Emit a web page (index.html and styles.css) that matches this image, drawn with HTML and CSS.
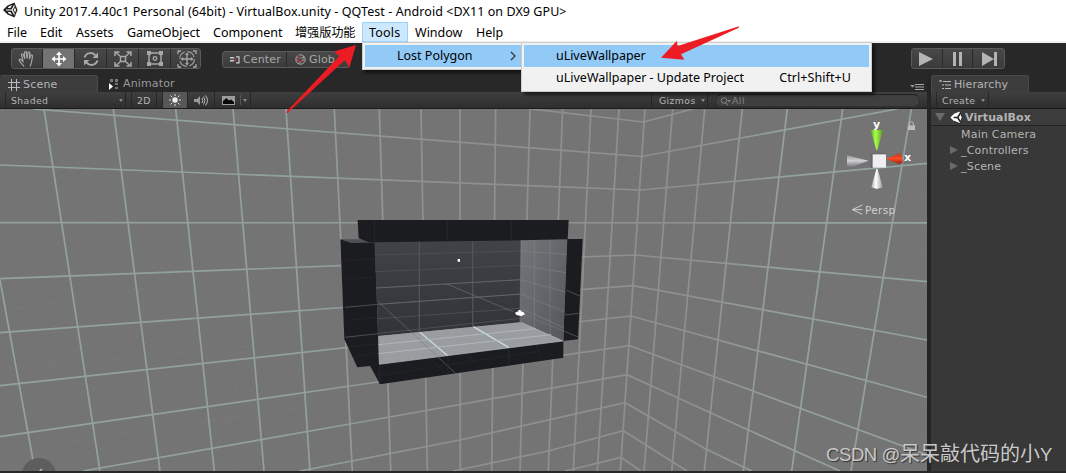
FILE: index.html
```html
<!DOCTYPE html>
<html lang="en">
<head>
<meta charset="utf-8">
<title>Unity 2017.4.40c1 Personal</title>
<link rel="stylesheet" href="styles.css">
</head>
<body>
<div class="window">
  <header class="titlebar">
    <svg class="unity-icon" width="15" height="16" viewBox="0 0 15 16"><path d="M0 8 4.500 3.500 11.500.500 14.500 8 11.500 15.500 4.500 12.500Z" fill="#222"/><path d="M3 8h6M9 8 11.500 3.500M9 8 11.500 12.500" stroke="#fff" stroke-width="1.200"/><path d="M5.500 4.800 9 3 7.500 6H4.800ZM5.500 11.200 9 13 7.500 10H4.800ZM12 5.500 13 8 12 10.500 10.800 8Z" fill="#fff"/></svg>
    <span class="title">Unity 2017.4.40c1 Personal (64bit) - VirtualBox.unity - QQTest - Android &lt;DX11 on DX9 GPU&gt;</span>
  </header>
  <nav class="menubar">
    <span class="m-file">File</span><span class="m-edit">Edit</span><span class="m-assets">Assets</span><span class="m-object">GameObject</span><span class="m-comp">Component</span><span class="m-cn">增强版功能</span><span class="m-tools">Tools</span><span class="m-window">Window</span><span class="m-help">Help</span>
  </nav>
  <div class="toolbar">
    <div class="group tools">
      <i><svg width="20" height="18" viewBox="0 0 20 18"><path d="M7 16.500C5 13.500 1.500 11 2.200 9.600c.8-1.100 2.200.2 3.800 1.600L4.500 5c-.1-1.400 1.400-1.500 1.800-.2L7.800 8.700 7.500 2.600c.1-1.300 1.800-1.300 2 0l.5 5.900 1-5.500c.3-1.300 1.900-1 1.800.3L12.300 9l1.500-3.500c.6-1 1.900-.5 1.700.6-.5 3-.8 7.400-2.500 10.400" fill="none" stroke="#a5a5a5" stroke-width="1.200"/></svg></i>
      <i class="on"><svg width="16" height="16" viewBox="0 0 16 16"><path d="M8 3v10M3 8h10" stroke="#fff" stroke-width="1.600"/><path d="M8 .5 11 4H5ZM8 15.500 11 12H5ZM.5 8 4 5v6ZM15.500 8 12 5v6Z" fill="#fff"/></svg></i>
      <i><svg width="16" height="16" viewBox="0 0 16 16"><path d="M1.500 6.500C3.500 1 10 1 12.500 4.500M14.500 9.500C12.500 15 6 15 3.500 11.500" fill="none" stroke="#a8a8a8" stroke-width="2"/><path d="M15 1.500v5.500H9.500ZM1 14.500V9h5.500Z" fill="#a8a8a8"/></svg></i>
      <i><svg width="18" height="16" viewBox="0 0 18 16"><path d="M6.500 5.500h5v5h-5ZM2 1.500l4 3.500M16 1.500 12 5M2 14.500 6 11M16 14.500 12 11M1 5V1h4.500M12.500 1H17v4M1 11v4h4.500M12.500 15H17v-4" fill="none" stroke="#a8a8a8" stroke-width="1.500"/></svg></i>
      <i><svg width="18" height="17" viewBox="0 0 18 17"><path d="M3 3h12v11H3Z" fill="none" stroke="#a8a8a8" stroke-width="1.500"/><path d="M1 1h4v4H1ZM13 1h4v4h-4ZM1 12h4v4H1ZM13 12h4v4h-4Z" fill="#a8a8a8"/><circle cx="9" cy="8.500" r="1.800" fill="none" stroke="#a8a8a8" stroke-width="1.300"/></svg></i>
      <i><svg width="20" height="18" viewBox="0 0 20 18"><circle cx="10" cy="9" r="7.300" fill="none" stroke="#999" stroke-width="1.200" stroke-dasharray="9 2.500"/><path d="M1 4V1h3M16 1h3v3M1 14v3h3M16 17h3v-3M10 4v10M5 9h10" fill="none" stroke="#a8a8a8" stroke-width="1.300"/><path d="M10 2.500 12 5H8ZM10 15.500 12 13H8ZM3.500 9 6 7v4ZM16.500 9 14 7v4Z" fill="#a8a8a8"/></svg></i>
    </div>
    <div class="group pivot">
      <span class="center"><svg width="10" height="8" viewBox="0 0 10 8"><path d="M0 1h4v1.500H0ZM0 4h4v1.500H0Z" fill="#ccc"/><path d="M6 .8h3v6H6" fill="none" stroke="#ccc" stroke-width="1.200"/><path d="M4 2h2v3H4Z" fill="#8d4a4a"/></svg>Center</span>
      <span class="global"><svg width="11" height="11" viewBox="0 0 11 11"><circle cx="5.500" cy="5.500" r="4.700" fill="#484848" stroke="#aaa"/><path d="M1.500 3.500Q6 5 9.500 3M3 9.500Q9 7.500 8.500 2M1 6Q6 8 10 6" fill="none" stroke="#aaa" stroke-width=".7"/><path d="M3.500 1v6h4" fill="none" stroke="#a52d35" stroke-width="1.500"/></svg>Glob</span>
    </div>
    <div class="group play">
      <i><svg width="16" height="14"><path d="M1 0v14L15 7Z" fill="#b4b4b4"/></svg></i><i><svg width="12" height="14"><path d="M2 0h3v14H2ZM8 0h3v14H8Z" fill="#b4b4b4"/></svg></i><i><svg width="16" height="14"><path d="M0 0v14L12 7ZM12 0h3v14h-3Z" fill="#b4b4b4"/></svg></i>
    </div>
  </div>
  <div class="workspace">
    <section class="scene">
      <div class="tabs">
        <span class="tab scene-tab"><svg width="12" height="12"><path d="M0 3.500h12M0 8.500h12M3.500 0v12M8.500 0v12" stroke="#bbb"/></svg>Scene</span>
        <span class="tab-off"><svg width="11" height="11"><path d="M2 0h3v3H2ZM7 0h3v3H7ZM7 4h3v2H7ZM7 8h3v2H7Z" fill="#777"/><path d="M1 4v7l4-3.500Z" fill="#fff"/></svg>Animator</span>
        <svg class="options" width="14" height="8"><path d="M0 2h5L2.500 4.500Z" fill="#999"/><path d="M5 1.500h9M5 4h9M5 6.500h9" stroke="#aaa"/></svg>
      </div>
      <div class="viewbar">
        <span class="shaded">Shaded<b class="caret"></b></span><span class="gap"></span><span class="twod">2D</span><span class="gap2"></span>
        <span class="light"><svg width="14" height="12" viewBox="0 0 14 12"><circle cx="7" cy="6" r="2.700" fill="#eee"/><path d="M7 0v2M7 10v2M1 6h2M11 6h2M2.500 1.500l1.700 1.700M9.800 8.800l1.700 1.700M11.500 1.500 9.800 3.200M4.200 8.800 2.500 10.500" stroke="#ddd"/></svg></span>
        <span class="audio"><svg width="14" height="11" viewBox="0 0 14 11"><path d="M0 4h3l3-3v9L3 7H0Z" fill="#999"/><path d="M8 3q1.500 2.500 0 5M9.500 1.500q3 4 0 8M11.500.500q4 5 0 10" fill="none" stroke="#bbb"/></svg></span>
        <span class="fx"><svg width="13" height="9" viewBox="0 0 13 9"><path d="M0 0h13v9H0Z" fill="#9c9c9c"/><path d="M1 8V5L4.500 2 7 4.500 9 3.500 12 6V8Z" fill="#080808"/></svg><u></u><b class="caret"></b></span>
        <span class="spacer"></span>
        <span class="gizmos">Gizmos<b class="caret"></b></span>
        <span class="search"><svg width="12" height="9"><circle cx="4" cy="3.500" r="2.800" fill="none" stroke="#858585"/><path d="M5.500 5.500 8 8.500" stroke="#858585"/><path d="M7 3h4L9 5.500Z" fill="#858585"/></svg>All</span>
      </div>
      <svg class="viewport" width="927" height="362" viewBox="0 109 927 362">
        <defs>
          <linearGradient id="line" gradientUnits="userSpaceOnUse" x1="0" y1="0" x2="927" y2="0"><stop offset="0" stop-color="#93a29f"/><stop offset=".33" stop-color="#91a09d"/><stop offset=".48" stop-color="#8e8f8f"/><stop offset=".74" stop-color="#8e8f8f"/><stop offset=".85" stop-color="#93a29f"/><stop offset="1" stop-color="#93a29f"/></linearGradient>
          <linearGradient id="back" x1="0" y1="0" x2="0" y2="1"><stop offset="0" stop-color="#424348"/><stop offset="1" stop-color="#323338"/></linearGradient>
          <linearGradient id="side" x1="0" y1="0" x2="1" y2="1"><stop offset="0" stop-color="#75767a"/><stop offset="1" stop-color="#55565b"/></linearGradient>
          <linearGradient id="green"><stop offset="0" stop-color="#5fa51f"/><stop offset=".4" stop-color="#a5ff4c"/><stop offset="1" stop-color="#5b971f"/></linearGradient>
          <linearGradient id="red" x1="0" y1="0" x2="0" y2="1"><stop offset="0" stop-color="#b53a20"/><stop offset=".5" stop-color="#fb4a25"/><stop offset="1" stop-color="#99250f"/></linearGradient>
          <linearGradient id="grayx" x1="0" y1="0" x2="0" y2="1"><stop offset="0" stop-color="#999"/><stop offset=".4" stop-color="#d0d0d4"/><stop offset="1" stop-color="#606060"/></linearGradient>
          <linearGradient id="white"><stop offset="0" stop-color="#aaa"/><stop offset=".4" stop-color="#fff"/><stop offset="1" stop-color="#999"/></linearGradient>
          <pattern id="dots" width="15" height="12" patternUnits="userSpaceOnUse" patternTransform="rotate(8)"><path d="M2 3h1.500M9 9h1.500" stroke="#7c7c7c"/></pattern>
        </defs>
        <path d="M0 109h927v362H0Z" fill="#747474"/>
        <path d="M0 109h310v362H0ZM740 109h187v362H740Z" fill="url(#dots)" opacity=".65"/>
        <path d="M0 311 190 282M25 378Q120 325 190 282M250 350 275 275M218 446 250 350M0 370 345 337M0 452 350 400M480 400 550 471M581 300 660 311M581 338 720 382M581 371 650 350" fill="none" stroke="#7b7b7b" opacity=".6"/>
        <g fill="none" stroke="url(#line)" stroke-width="1.700">
          <path d="M531 109 643.500 122 693 109M33 109 641.700 156.500 897 109M0 165 641 190 927 163.300M0 222.700 927 222.800M0 278.700 340 265.700 635 255 927 281.700M0 332.700 343 307.500 633 285.700 927 340M0 385.700 346 347.700 631 316 927 397.300M0 436.700 350 386 629.300 345.700 753 391 857.300 429.300 927 455M83 471 350 424 627 374.700 748.300 430 840 471M300 471 460 440 625 402.700 705.700 449 751.700 471M453 471 548.300 451 623.300 430.700 687 471M565 471 621 457.300 641 471"/>
          <path d="M0 280 35 471M44 109 100 471M113.300 109 160 471M175.700 109 214.300 471M233 109 264 471M286 109 310 471M334.300 109 352.300 471M379.300 109 390.700 471M421 109 427.300 471M460 109 460.300 471M495.700 109 491.700 471M530 109 520 471M562.700 109 548.300 471M591 109 573.300 471M619 109 597.300 471M645 109 620.300 471M672.700 109 644 471M704.700 109 671.700 471M742.300 109 704.300 471M787.300 109 743.300 471M842.700 109 791.700 471M911.300 109 851 471"/>
        </g>
        <g transform="translate(320 200) scale(.33333)">
          <path d="M740 117h48l-14 301-44 5ZM61 118l34 9h70l12 368-27 3-38 4-39-84Z" fill="#1b1c20"/>
          <path d="M61 118h65l36 8-68 3Z" fill="#505156"/>
          <path d="M163 124 603 118v249L175 408Z" fill="url(#back)"/>
          <path d="M603 118h139l-12 305-130-56Z" fill="url(#side)"/>
          <path d="M175 408 600 367 730 423 177 493Z" fill="#9b9ca0"/>
          <path d="M177 493 730 423v50L180 553 150 497Z" fill="#1b1c20"/>
          <path d="M113 60h633l-3 58-143 3-435 6-20-1-29-11Z" fill="#1b1c20"/>
          <path d="M298 126v269M458 124v255" stroke="#4a565d" stroke-width="4" fill="none"/>
          <path d="M165 165 603 153M165 215 603 196M168 264 603 239M175 313 603 282M175 356 603 325M175 400 603 355" stroke="#505156" stroke-width="2.500" fill="none"/>
          <path d="M603 120 600 367M643 120v265M690 120v285M603 153 740 163M603 196 738 218M603 239 735 276M603 282 733 335M603 325 731 383" stroke="#85868a" stroke-width="2.500" opacity=".6" fill="none"/>
          <path d="M300 397 383 467M460 380 567 443" stroke="#c6dce0" stroke-width="4" fill="none"/>
          <path d="M177 493 728 423M603 367 728 423" stroke="#b4c3c8" stroke-width="2" fill="none"/>
          <path d="M175 434 647 386M175 461 694 404" stroke="#b0bdc0" stroke-width="2.500" fill="none"/>
          <path d="M173 303 407 520M380 252 580 335M615 345 774 411M75 322 172 313M75 412 174 401M740 271 779 288M735 345 776 340M168 264 603 239M175 313 603 282" stroke="#77787b" stroke-width="2.500" opacity=".65" fill="none"/>
          <path d="M163 62v63M382 62v60M574 62v58M384 468v55M566 445v52M178 494v57" stroke="#283137" stroke-width="2"/>
          <path d="M79 180 165 177M79 238 165 230M85 361 173 352M88 441 175 430M102 470 175 458M170 527 650 455M230 487 280 536M330 474 375 520M440 461 480 506M650 435 665 480" stroke="#2a2b30" stroke-width="1.500"/>
          <path d="M413 177h7v8h-7ZM585 338l10-4 1-4h6v4l8 2 5 7-11 5-15-3Z" fill="#fff"/>
        </g>
        <g transform="translate(830 100) scale(.33333)">
          <path d="M122 90h37l-17 60h-3Z" fill="url(#green)"/><path d="M51 166 116 182 51 206Z" fill="url(#grayx)"/>
          <path d="M168 177 209 159q12 15 8 31l-9 2Z" fill="url(#red)"/><path d="M122 159h45v5h-39v40h-6Z" fill="#666"/><path d="M128 163h40v40h-40Z" fill="#eeeff3"/>
          <path d="M139 207h4l15 55-17 5-17-5Z" fill="url(#white)"/>
          <path d="M97 315 67 329 97 343M69 329h28" fill="none" stroke="#d0d0d0" stroke-width="3"/>
          <path d="M234 76h21v14h-21Z" fill="#bdbdbd"/><path d="M238 76v-4q0-7 6-7t6 7v4" fill="none" stroke="#bdbdbd" stroke-width="3"/>
        </g>
        <text x="873" y="128" class="axis">y</text><text x="904" y="161" class="axis">x</text><text x="865" y="214" class="persp">Persp</text>
        <circle cx="39" cy="475" r="17" fill="#5e5e5e"/><path d="M38 473l4-4" stroke="#bbb" stroke-width="1.500"/>
      </svg>
    </section>
    <aside class="hierarchy">
      <div class="tabs"><span class="tab htab"><svg width="12" height="10"><path d="M0 1h2M4 1.500h8M3 5h2M6 5h6M3 8.500h2M6 8.500h6M2 0v2" stroke="#bbb" stroke-width="1.200"/></svg>Hierarchy</span></div>
      <div class="viewbar"><span class="create">Create<b class="caret"></b></span></div>
      <div class="row root"><b class="down"></b><svg width="13" height="13" viewBox="0 0 15 16"><path d="M0 8 4.500 3.500 11.500.500 14.500 8 11.500 15.500 4.500 12.500Z" fill="#fff"/><path d="M4 8h5M9 8 12 3M9 8l3 5" stroke="#222" stroke-width="2"/><path d="M11.500.500 14.500 8 11.500 15.500 4.500 12.500" fill="none" stroke="#111"/></svg><span>VirtualBox</span></div>
      <div class="row child">Main Camera</div>
      <div class="row child"><b class="right"></b>_Controllers</div>
      <div class="row child"><b class="right"></b>_Scene</div>
    </aside>
  </div>
  <div class="popup first"><div class="item hot"><span class="t-lost">Lost Polygon</span><svg width="6" height="10"><path d="M1 1 5 5 1 9" fill="none" stroke="#333" stroke-width="1.200"/></svg></div></div>
  <div class="popup second">
    <div class="item hot"><span class="t-live">uLiveWallpaper</span></div>
    <div class="item"><span class="t-upd">uLiveWallpaper - Update Project</span><span class="keys">Ctrl+Shift+U</span></div>
  </div>
  <svg class="arrows" width="1066" height="120"><path d="M356 45 334 51.500 339.300 56 286 112.300 287.500 113 345 60 349.300 67.700ZM661 57.700 676.700 41 677.700 46 739 26.300 738.700 27.700 681 54.300 684.300 59.700Z" fill="#ed1c24"/></svg>
  <div class="watermark"><span class="latin">CSDN @</span>呆呆敲代码的小<span class="latin">Y</span></div>
</div>
</body>
</html>
```
FILE: styles.css
```css
* { box-sizing: border-box; }
body { margin: 0; background: #282828; overflow: hidden; }
.window { position: relative; width: 1066px; height: 473px; display: flex; flex-direction: column; overflow: hidden; background: #282828; font: 11px/16px "DejaVu Sans", sans-serif; color: #b4b4b4; }
.window svg { flex: none; }
.titlebar { height: 22px; background: #fff; display: flex; align-items: center; padding-left: 3px; gap: 6px; font: 12.5px/22px "Noto Sans", sans-serif; color: #000; }
.title { white-space: nowrap; letter-spacing: .075px; padding-top: 2px; }
.unity-icon { margin-top: -2px; }
.menubar { height: 21px; background: #fff; border-bottom: 2px solid #f0f0f0; display: flex; font: 12.5px/21px "Noto Sans", "Noto Sans CJK SC", sans-serif; color: #000; white-space: nowrap; }
.menubar span { flex: none; padding-left: 7px; }
.m-file { width: 33px; } .m-edit { width: 36px; } .m-assets { width: 51px; } .m-object { width: 86px; } .m-comp { width: 82px; }
.menubar .m-cn { width: 74px; font-family: "Noto Sans CJK SC", sans-serif; font-size: 12.2px; letter-spacing: -.1px; }
.menubar .m-tools { width: 46px; height: 20px; background: #cce8ff; border: 1px solid #99d1ff; padding-left: 6px; line-height: 19px; letter-spacing: .2px; }
.m-window { width: 61px; }
.toolbar { height: 32px; display: flex; align-items: flex-start; padding: 5px 61px 0 11px; }
.group { display: flex; border-radius: 3px; background: linear-gradient(#484848, #3b3b3b); border: 1px solid #5a5a5a; overflow: hidden; }
.group i { display: flex; align-items: center; justify-content: center; border-right: 1px solid #292929; }
.group i:last-child { border-right: 0; }
.tools { width: 190px; height: 21px; }
.tools i { width: 32px; padding-left: 1px; flex: none; }
.tools i:first-child, .tools i:last-child { width: 31px; }
.tools i:first-child { padding-left: 0; }
.tools .on { background: #737373; padding-left: 0; }
.pivot { width: 128px; height: 17px; margin: 3px 0 0 21px; color: #a8a8a8; line-height: 15px; }
.pivot span { display: flex; align-items: center; gap: 3px; padding-left: 7px; letter-spacing: .15px; }
.pivot .global { padding-left: 8px; }
.center { width: 64px; border-right: 1px solid #282828; }
.play { width: 94px; height: 21px; margin-left: auto; }
.play i { flex: 1; padding: 1px 1px 0 0; }
.play i:last-child { padding: 1px 0 0 2px; }
.workspace { display: flex; height: 396px; }
.scene { width: 931px; border-right: 4px solid #252525; display: flex; flex-direction: column; }
.tabs { height: 17px; display: flex; }
.tab { display: flex; align-items: center; border-radius: 3px 3px 0 0; background: #3d3d3d; border: 1px solid #4a4a4a; border-bottom: 0; padding-top: 1px; }
.scene-tab { width: 98px; padding-left: 8px; gap: 3px; border-left: 0; letter-spacing: .2px; }
.tab-off { display: flex; align-items: center; padding: 1px 0 0 10px; gap: 4px; color: #999; letter-spacing: .15px; }
.options { margin: 8px 3px 0 auto; }
.viewbar { height: 17px; border-bottom: 1px solid #1b1b1b; background: linear-gradient(#3f3f3f, #2e2e2e); display: flex; font-size: 9.3px; letter-spacing: .4px; line-height: 17px; }
.viewbar span { display: flex; align-items: center; border-right: 1px solid #262626; }
.caret { border: 2.5px solid transparent; border-top: 3px solid #888; border-bottom: 0; }
.shaded { width: 121px; margin-left: 5px; padding: 0 2px 0 5px; justify-content: space-between; border-left: 1px solid #262626; }
.gap { width: 6px; } .gap2 { width: 6px; }
.twod { width: 25px; padding-left: 5px; }
.light { width: 25px; justify-content: center; background: #575757; }
.audio { width: 27px; justify-content: center; }
.fx { width: 36px; padding-left: 7px; }
.fx u { width: 1px; height: 10px; background: #555; margin: 0 2px 0 5px; }
.viewbar .spacer { flex: 1; }
.gizmos { width: 56px; padding: 0 2px 0 7px; justify-content: space-between; }
.viewbar .search { width: 205px; height: 13px; margin: 2px 7px 0 7px; padding-left: 4px; border: 1px solid #303030; border-top-color: #202020; border-radius: 7px; background: #3f3f3f; color: #858585; line-height: 12px; letter-spacing: .5px; }
.search svg { margin-top: 2px; }
.viewport { display: block; }
.axis { font: bold 11px "DejaVu Sans", sans-serif; fill: #fff; }
.persp { font: 10.5px "DejaVu Sans", sans-serif; fill: #d0d0d0; letter-spacing: .35px; }
.hierarchy { flex: 1; background: #383838; }
.hierarchy .tabs { background: #282828; }
.htab { width: 98px; padding-left: 7px; gap: 3px; letter-spacing: .1px; }
.create { width: 53px; margin-left: 5px; padding-left: 5px; gap: 6px; border-left: 1px solid #262626; }
.row { height: 16px; display: flex; align-items: center; }
.root { height: 17px; border-bottom: 1px solid #232323; background: #3c3c3c; font-weight: bold; padding-left: 4px; gap: 5px; letter-spacing: .1px; }
.root svg { margin-right: -3px; }
.root span { padding-top: 2px; }
.down { border: 5px solid transparent; border-top: 8px solid #6b6b6b; border-bottom: 0; }
.child { padding: 2px 0 0 30px; letter-spacing: .2px; position: relative; }
.right { position: absolute; left: 19px; top: 4px; border: 4.5px solid transparent; border-left: 8px solid #6b6b6b; border-right: 0; }
.popup { position: absolute; background: #f1f1f1; border: 1px solid #ccc; padding: 2px; font: 12.5px/22px "Noto Sans", sans-serif; color: #000; box-shadow: 3px 3px 3px rgba(0,0,0,.55); white-space: nowrap; }
.first { left: 362px; top: 42px; width: 160px; height: 28px; padding-right: 0; }
.second { left: 521px; top: 42px; width: 351px; height: 50px; }
.item { height: 22px; display: flex; align-items: center; padding-left: 32px; }
.hot { background: #91c9f7; }
.item svg { margin-left: auto; margin-right: 5px; }
.t-live { letter-spacing: -.05px; }
.keys { margin-left: auto; padding-right: 18px; letter-spacing: .08px; }
.arrows { position: absolute; left: 0; top: 0; }
.watermark { position: absolute; left: 826px; top: 440px; font: 20px/26px "Noto Sans CJK SC", sans-serif; color: #c9c9c9; text-shadow: 1px 1px 1px #333; white-space: nowrap; }
.latin { font: 18.5px/26px "Liberation Sans", sans-serif; letter-spacing: -.4px; }
```
